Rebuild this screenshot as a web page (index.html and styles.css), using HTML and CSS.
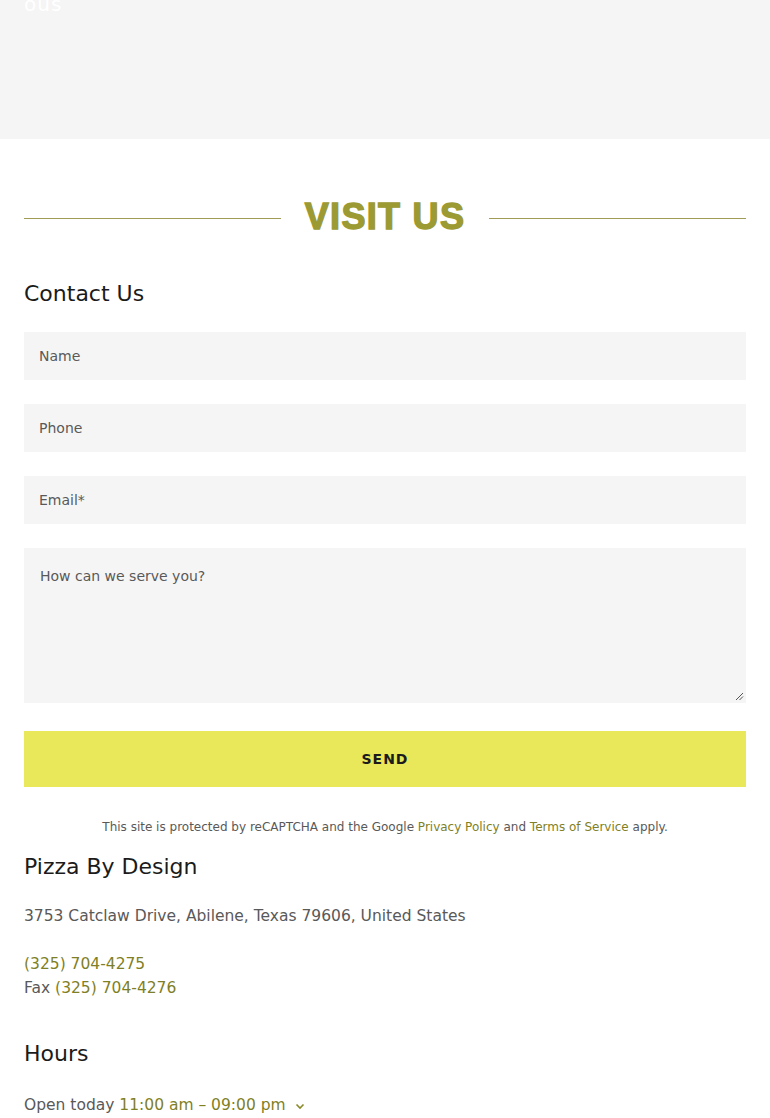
FILE: index.html
```html
<!DOCTYPE html>
<html>
<head>
<meta charset="utf-8">
<link rel="stylesheet" href="styles.css">
</head>
<body>
<div class="band"><span class="band-text">ous</span></div>
<section class="visit">
  <div class="title-row">
    <span class="rule"></span>
    <h2 class="title">VISIT US</h2>
    <span class="rule"></span>
  </div>
  <h3 class="heading">Contact Us</h3>
  <form class="form">
    <div class="field">Name</div>
    <div class="field">Phone</div>
    <div class="field">Email*</div>
    <div class="area">How can we serve you?
      <svg class="grip" width="9" height="9" viewBox="0 0 9 9"><path d="M1 8 L8 1 M4.5 8 L8 4.5" stroke="#555" stroke-width="1"/></svg>
    </div>
    <div class="send">SEND</div>
  </form>
  <p class="captcha">This site is protected by reCAPTCHA and the Google <a>Privacy Policy</a> and <a>Terms of Service</a> apply.</p>
  <h3 class="heading biz">Pizza By Design</h3>
  <p class="text addr">3753 Catclaw Drive, Abilene, Texas 79606, United States</p>
  <p class="text phones"><a>(325) 704-4275</a><br>Fax <a>(325) 704-4276</a></p>
  <h3 class="heading hours">Hours</h3>
  <p class="text open">Open today <a>11:00 am – 09:00 pm</a> <svg class="chev" width="10" height="7" viewBox="0 0 10 7"><path d="M1.5 1.5 L5 5 L8.5 1.5" fill="none" stroke="#8a8a2a" stroke-width="1.6"/></svg></p>
</section>
</body>
</html>
```
FILE: styles.css
```css
* { box-sizing: border-box; }
body { margin: 0; background: #fff; font-family: "DejaVu Sans", "Open Sans", sans-serif; color: #1b1b1b; }
.band { height: 139px; background: #f5f5f5; overflow: hidden; padding-left: 24px; }
.band-text { display: block; color: #fff; font-size: 20px; line-height: 20px; margin-top: -6px; letter-spacing: 1px; }
.visit { padding: 0 24px; }
.title-row { display: flex; align-items: center; gap: 24px; margin-top: 58px; height: 40px; }
.rule { flex: 1; height: 1px; background: #a09c55; margin-top: 2px; }
.title { margin: 0; font-family: "Liberation Sans", Arial, sans-serif; font-weight: 900; font-size: 36px; letter-spacing: 1.3px; color: #9c9a32; -webkit-text-stroke: 1.4px #9c9a32; line-height: 40px; }
.heading { margin: 0; font-weight: 400; font-size: 22px; line-height: 30px; color: #1b1b1b; }
.title-row + .heading { margin-top: 42px; }
.form { display: flex; flex-direction: column; gap: 24px; margin-top: 23px; }
.field { height: 48px; background: #f5f5f5; padding: 0 15px; display: flex; align-items: center; font-size: 14px; color: #595959; }
.area { position: relative; height: 155px; background: #f5f5f5; padding: 20px 16px; font-size: 14px; color: #595959; line-height: 16px; margin-bottom: 4px; }
.grip { position: absolute; right: 2px; bottom: 2px; }
.send { height: 56px; background: #e8e85a; display: flex; align-items: center; justify-content: center; font-size: 14px; font-weight: 700; letter-spacing: 1px; color: #1b1b1b; }
.captcha { margin: 32px 0 0; text-align: center; font-size: 12px; line-height: 16px; color: #595959; }
.captcha a, .text a { color: #7f7f25; }
.biz { margin-top: 17px; }
.text { margin: 0; font-size: 15.5px; line-height: 24px; color: #595959; }
.addr { margin-top: 22px; }
.phones { margin-top: 24px; }
.hours { margin-top: 39px; }
.open { margin-top: 24px; }
.chev { margin-left: 4px; }
```
